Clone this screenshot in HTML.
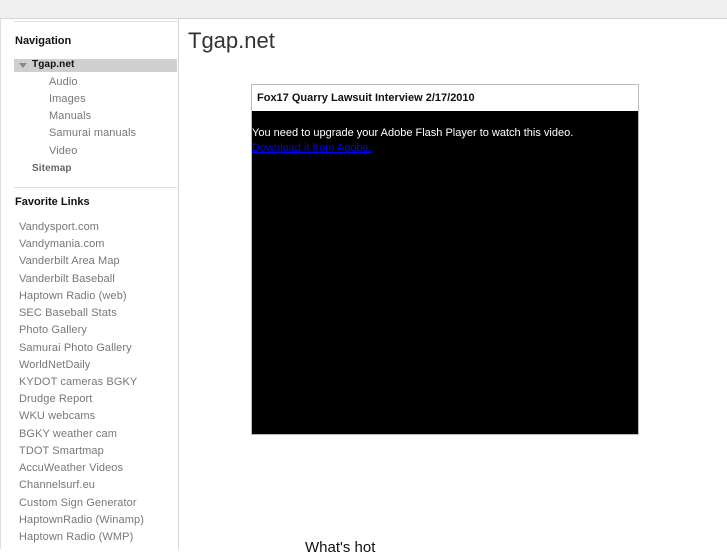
<!DOCTYPE html>
<html><head><meta charset="utf-8"><style>
body{margin:0;width:727px;height:545px;overflow:hidden;background:#fff;font-family:"Liberation Sans",sans-serif;position:relative}
.top{position:absolute;left:0;top:0;width:727px;height:18px;background:#efefef;border-bottom:1px solid #d6d6d6}
.side{position:absolute;left:0;top:19px;width:177px;height:530px;border-right:1px solid #d6d6d6;border-left:1px solid #e0e0e0}
.t{position:absolute;font-size:11px;color:#777;white-space:nowrap;letter-spacing:0.1px}
h3{position:absolute;margin:0;font-size:11px;font-weight:bold;color:#111}
</style></head><body>
<div class="top"></div>
<div class="side"></div>
<div style="position:absolute;left:14px;top:21px;width:163px;border-top:1px solid #ddd"></div>
<h3 style="left:15px;top:35px">Navigation</h3>
<div style="position:absolute;left:14px;top:59px;width:163px;height:13px;background:#cfcfcf"></div>
<div style="position:absolute;left:19px;top:63px;width:0;height:0;border-left:4px solid transparent;border-right:4px solid transparent;border-top:5px solid #888"></div>
<div class="t" style="left:32px;top:59px;font-weight:bold;color:#111;font-size:10px">Tgap.net</div>
<div class="t" style="left:49px;top:76px">Audio</div>
<div class="t" style="left:49px;top:93px">Images</div>
<div class="t" style="left:49px;top:110px">Manuals</div>
<div class="t" style="left:49px;top:127px">Samurai manuals</div>
<div class="t" style="left:49px;top:145px">Video</div>
<div class="t" style="left:32px;top:163px;font-weight:bold;color:#666;font-size:10px">Sitemap</div>
<div style="position:absolute;left:14px;top:187px;width:163px;border-top:1px solid #ddd"></div>
<h3 style="left:15px;top:196px">Favorite Links</h3>
<div class="t" style="left:19px;top:221px">Vandysport.com</div>
<div class="t" style="left:19px;top:238px">Vandymania.com</div>
<div class="t" style="left:19px;top:255px">Vanderbilt Area Map</div>
<div class="t" style="left:19px;top:273px">Vanderbilt Baseball</div>
<div class="t" style="left:19px;top:290px">Haptown Radio (web)</div>
<div class="t" style="left:19px;top:307px">SEC Baseball Stats</div>
<div class="t" style="left:19px;top:324px">Photo Gallery</div>
<div class="t" style="left:19px;top:342px">Samurai Photo Gallery</div>
<div class="t" style="left:19px;top:359px">WorldNetDaily</div>
<div class="t" style="left:19px;top:376px">KYDOT cameras BGKY</div>
<div class="t" style="left:19px;top:393px">Drudge Report</div>
<div class="t" style="left:19px;top:410px">WKU webcams</div>
<div class="t" style="left:19px;top:428px">BGKY weather cam</div>
<div class="t" style="left:19px;top:445px">TDOT Smartmap</div>
<div class="t" style="left:19px;top:462px">AccuWeather Videos</div>
<div class="t" style="left:19px;top:479px">Channelsurf.eu</div>
<div class="t" style="left:19px;top:497px">Custom Sign Generator</div>
<div class="t" style="left:19px;top:514px">HaptownRadio (Winamp)</div>
<div class="t" style="left:19px;top:531px">Haptown Radio (WMP)</div>
<div style="position:absolute;left:188px;top:28px;font-size:22px;color:#333">Tgap.net</div>
<div style="position:absolute;left:251px;top:84px;width:386px;height:349px;border:1px solid #bbb;background:#000">
<div style="height:26px;background:#fff;font-size:11px;font-weight:bold;line-height:26px;padding-left:5px;color:#111">Fox17 Quarry Lawsuit Interview 2/17/2010</div>
<div style="color:#fff;font-size:11px;margin-top:15px;line-height:15px">You need to upgrade your Adobe Flash Player to watch this video.<br><span style="color:#00f;text-decoration:underline">Download it from Adobe.</span></div>
</div>
<div style="position:absolute;left:305px;top:539px;font-size:15px;color:#111">What's hot</div>
</body></html>
